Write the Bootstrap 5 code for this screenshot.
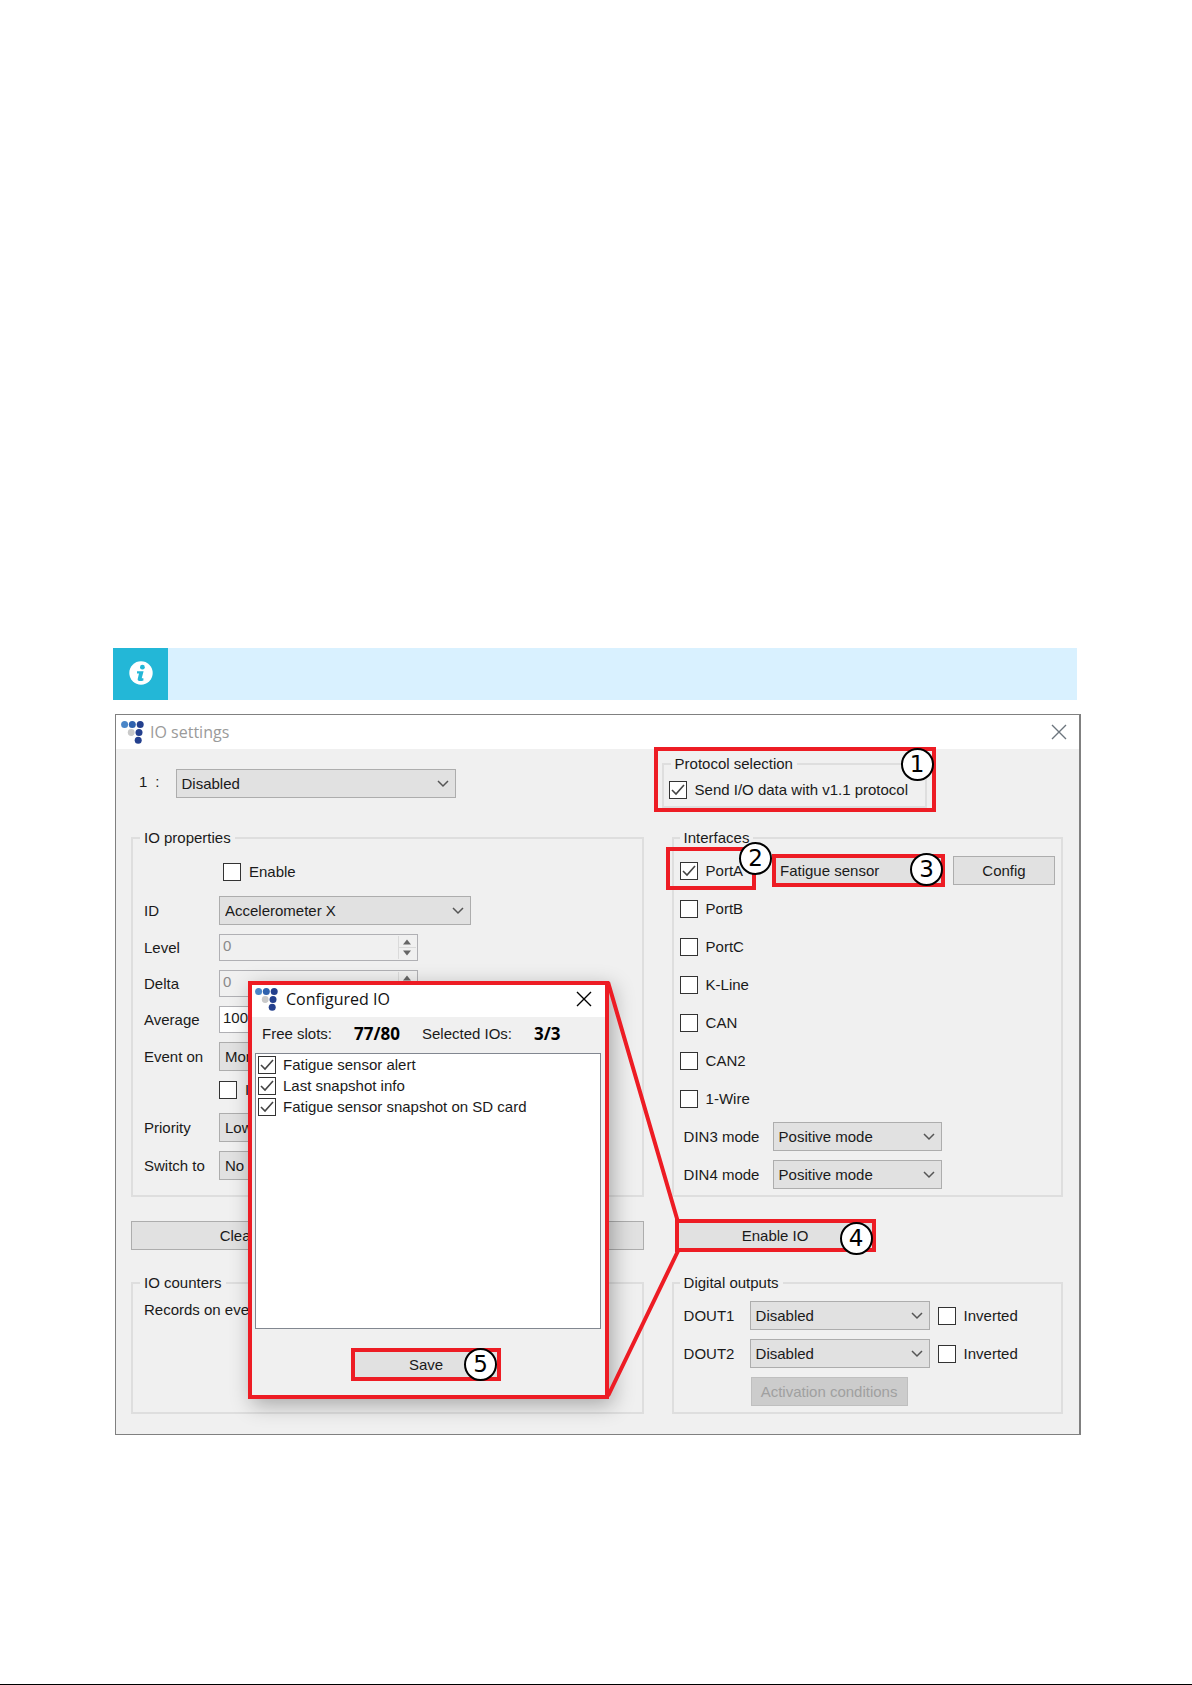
<!DOCTYPE html>
<html lang="en">
<head>
<meta charset="utf-8">
<meta name="viewport" content="width=device-width, initial-scale=1">
<title>IO settings</title>
<link href="https://cdn.jsdelivr.net/npm/bootstrap@5.3.0/dist/css/bootstrap.min.css" rel="stylesheet">
<style>
body{font-family:"Liberation Sans",Arial,sans-serif;font-size:15px;line-height:18px;color:#1a1a1a;background:#fff;min-height:100vh;border-bottom:1px solid #000}
.doc-page{padding:648px 111px 40px 113px}
.note-bar{height:52px;background:#d9f1ff;margin-right:4px}
.note-icon{width:55px;padding-bottom:2px;background:#23b7d7}
.app-window{margin:14px 0 0 2px;border:1px solid #808080;border-right-width:2px;background:#f0f0f0}
.title-bar{height:34px;background:#fff;font-family:"Open Sans","Noto Sans",sans-serif;font-size:16px;padding-left:5px}
.title-bar button,.dialog-title button{border:0;background:none;padding:0;line-height:0}
.main-title{color:#9a9a9a;padding:0 12px 0 6px}
.settings-grid{display:grid;grid-template-columns:512fr 391fr;column-gap:28px;padding:0 16px 20px 15px}
.group-box{border:2px solid #dedede;padding:9px 6px 6px 11px}
.group-box>legend{float:none;width:auto;margin:0 0 0 -4px;padding:0 4px;font-size:15px;line-height:18px}
.group-right{padding-left:6px}
.group-right>legend{margin-left:0}
.rows{display:flex;flex-direction:column;gap:9px}
.rows>div{display:flex;align-items:center}
.line{min-height:29px}
.line-first{min-height:31px}
.line-mid{min-height:24px}
.lab{width:75px;flex:none}
.lab-din{width:89px;margin-left:4px;flex:none}
.lab-out{width:66px;margin-left:4px;flex:none}
.form-select{--bs-form-select-bg-img:url("data:image/svg+xml,%3csvg xmlns='http://www.w3.org/2000/svg' viewBox='0 0 12 8'%3e%3cpath fill='none' stroke='%23555' stroke-width='1.5' d='M1 1l5 5 5-5'/%3e%3c/svg%3e");height:29px;font-size:15px;line-height:18px;padding:4px 24px 4px 5px;border:1px solid #adadad;border-radius:0;background-color:#e1e1e1;background-size:12px 8px;background-position:right 6px center;color:#1a1a1a}
.w-main{width:280px}.w-id{width:252px}.w-din{width:169px}.w-out{width:180px}
.num-box{width:199px;height:27px;border:1px solid #b0b0b4;background:#f0f0f0;display:flex;padding:1px}
.num-box input{flex:1;min-width:0;border:0;background:none;padding:0 0 4px 2px;color:#1a1a1a;line-height:18px}
.num-box input:disabled{color:#8a8a8a}
.num-box.editable{background:#fff}
.form-check-input{width:18px;height:18px;margin:0;flex:none;border:1px solid #333;border-radius:0!important;background-color:#fff}
.form-check-input:checked{background-color:#fff;border-color:#333;--bs-form-check-bg-image:url("data:image/svg+xml,%3csvg xmlns='http://www.w3.org/2000/svg' viewBox='0 0 16 16'%3e%3cpath fill='none' stroke='%23444' stroke-width='1.6' d='M2 8l4 4 8-9'/%3e%3c/svg%3e")!important;background-image:url("data:image/svg+xml,%3csvg xmlns='http://www.w3.org/2000/svg' viewBox='0 0 16 16'%3e%3cpath fill='none' stroke='%23444' stroke-width='1.6' d='M2 8l4 4 8-9'/%3e%3c/svg%3e")}
.check{display:flex;align-items:center;gap:8px}
.check-indent{margin-left:79px}
.flat-btn{height:29px;border:1px solid #adadad;border-radius:0;background:#e1e1e1;font-size:15px;line-height:18px;padding:0;color:#1a1a1a}
.flat-btn:disabled{background:#ccc;border-color:#bfbfbf;color:#a0a0a0;opacity:1}
.w-config{width:102px}.w-enable{width:197px;margin-left:5px}.w-act{width:157px;margin-left:71px}.w-save{width:146px}
.hl{outline:4px solid #ed1c24;outline-offset:-2px}
.hl-frame{position:absolute;border:4px solid #ed1c24;pointer-events:none}
.step-dot{position:absolute;z-index:3;width:33px;height:33px;border:2px solid #000;border-radius:50%;background:#fff;color:#000;font:23px/29px "DejaVu Sans",sans-serif;text-align:center}
.protocol-box{width:265px;margin:6px 0 21px -10px;padding:8px 5px 7px 5px;position:relative}
.protocol-box>legend{margin-left:2px}
.port-pair{gap:10px}
.frame-protocol{inset:-26px -11px -6px -10px}
.frame-port{inset:-15px -13px -10px -14px}
.dot-1{right:-9px;top:-25px}
.dot-2{right:-29px;top:-20px}
.dot-3{right:0;top:-3px}
.dot-4{right:1px;top:1px}
.dot-5{right:2px;top:-2px}
.dialog-box{position:absolute;z-index:2;left:132px;top:232px;width:361px;height:418px;border:4px solid #ed1c24;background:#f0f0f0;box-shadow:4px 6px 20px rgba(0,0,0,.3)}
.dialog-title{height:32px;background:#fff;font-family:"Open Sans","Noto Sans",sans-serif;font-size:16px;padding:0 13px 4px 3px;color:#111}
.dialog-stats{height:36px;padding:0 0 3px 10px;gap:22px}
.dialog-stats strong{font-family:"Noto Sans",sans-serif;font-size:17px;color:#000}
.io-list{height:276px;margin:0 4px 21px 3px;border:1px solid #828790;background:#fff;padding:0 2px}
.io-list .check{height:21px;gap:7px}
.save-row{padding-right:5px}
.callout-lines{position:absolute;z-index:2;left:490px;top:230px;pointer-events:none}
</style>
<script src="https://cdn.jsdelivr.net/npm/bootstrap@5.3.0/dist/js/bootstrap.bundle.min.js"></script>
</head>
<body>
<svg width="0" height="0" class="position-absolute" aria-hidden="true">
<symbol id="logo" viewBox="0 0 23 23"><circle cx="3.6" cy="3.600" r="3.500" fill="#4a86c8"/><circle cx="11.300" cy="3.600" r="3.500" fill="#2f62ae"/><circle cx="19.200" cy="3.600" r="3.500" fill="#24408e"/><circle cx="10.200" cy="11.500" r="3.400" fill="#c9c9c9"/><circle cx="18" cy="11.500" r="3.500" fill="#24408e"/><circle cx="17.200" cy="19.200" r="3.500" fill="#24408e"/></symbol>
<symbol id="close" viewBox="0 0 16 16"><path d="M1 1l14 14M15 1L1 15" fill="none" stroke="currentColor" stroke-width="1.4"/></symbol>
<symbol id="spin" viewBox="0 0 22 23"><path d="M4.500 0v23M4 11.500h18" stroke="#dadada" fill="none"/><path d="M9 8.500l4-5 4 5zM9 14.500l4 5 4-5z" fill="#666"/></symbol>
</svg>
<main class="doc-page">
  <div class="note-bar d-flex" role="note">
    <div class="note-icon d-flex align-items-center justify-content-center"><svg width="24" height="24" viewBox="0 0 24 24" aria-label="Info"><circle cx="12" cy="12" r="11.700" fill="#fff"/><circle cx="13.400" cy="6.200" r="2.400" fill="#23b7d7"/><path d="M8 10.200h6.600l-1.900 7h1.700v2.300c-3 1-6.200.9-5.700-1.500l1.300-5.400H8z" fill="#23b7d7"/></svg></div>
  </div>

  <section class="app-window">
    <header class="title-bar d-flex align-items-center">
      <svg width="23" height="23"><use href="#logo"/></svg>
      <span class="main-title">IO settings</span>
      <button class="ms-auto me-2 pe-1 text-secondary" aria-label="Close"><svg width="16" height="16"><use href="#close"/></svg></button>
    </header>

    <div class="position-relative">
      <div class="settings-grid">
        <div class="d-flex align-items-start ps-2 pt-3">
          <label for="slot" class="d-flex gap-2 pt-2 pe-3 text-nowrap"><span>1</span><span>:</span></label>
          <select id="slot" class="form-select w-main mt-1"><option>Disabled</option></select>
        </div>
        <fieldset class="group-box protocol-box">
          <legend>Protocol selection</legend>
          <div class="check"><input class="form-check-input" type="checkbox" id="proto" checked><label for="proto" class="text-nowrap">Send I/O data with v1.1 protocol</label></div>
          <span class="hl-frame frame-protocol"></span><span class="step-dot dot-1">1</span>
        </fieldset>

        <fieldset class="group-box">
          <legend>IO properties</legend>
          <div class="rows">
            <div class="line-first"><div class="check check-indent"><input class="form-check-input" type="checkbox" id="en"><label for="en">Enable</label></div></div>
            <div><label class="lab" for="id">ID</label><select id="id" class="form-select w-id"><option>Accelerometer X</option></select></div>
            <div><label class="lab" for="lvl">Level</label><div class="num-box"><input id="lvl" value="0" disabled><svg width="22" height="23"><use href="#spin"/></svg></div></div>
            <div><label class="lab" for="dlt">Delta</label><div class="num-box"><input id="dlt" value="0" disabled><svg width="22" height="23"><use href="#spin"/></svg></div></div>
            <div><label class="lab" for="avg">Average</label><div class="num-box editable"><input id="avg" value="1000"><svg width="22" height="23"><use href="#spin"/></svg></div></div>
            <div><label class="lab" for="evt">Event on</label><select id="evt" class="form-select w-id"><option>Monitoring</option></select></div>
            <div class="line-mid"><span class="lab"></span><div class="check mb-1"><input class="form-check-input" type="checkbox" id="inc"><label for="inc">Include</label></div></div>
            <div><label class="lab" for="pri">Priority</label><select id="pri" class="form-select w-id"><option>Low</option></select></div>
            <div><label class="lab" for="swi">Switch to</label><select id="swi" class="form-select w-id"><option>No</option></select></div>
          </div>
        </fieldset>

        <fieldset class="group-box group-right">
          <legend>Interfaces</legend>
          <div class="rows">
            <div class="line">
              <div class="check position-relative"><input class="form-check-input" type="checkbox" id="pa" checked><label for="pa">PortA</label><span class="hl-frame frame-port"></span><span class="step-dot dot-2">2</span></div>
              <div class="d-flex ms-auto port-pair">
                <div class="position-relative"><select class="form-select w-din hl" aria-label="PortA device"><option>Fatigue sensor</option></select><span class="step-dot dot-3">3</span></div>
                <button class="btn flat-btn w-config">Config</button>
              </div>
            </div>
            <div class="line"><div class="check"><input class="form-check-input" type="checkbox" id="pb"><label for="pb">PortB</label></div></div>
            <div class="line"><div class="check"><input class="form-check-input" type="checkbox" id="pc"><label for="pc">PortC</label></div></div>
            <div class="line"><div class="check"><input class="form-check-input" type="checkbox" id="kl"><label for="kl">K-Line</label></div></div>
            <div class="line"><div class="check"><input class="form-check-input" type="checkbox" id="can"><label for="can">CAN</label></div></div>
            <div class="line"><div class="check"><input class="form-check-input" type="checkbox" id="can2"><label for="can2">CAN2</label></div></div>
            <div class="line"><div class="check"><input class="form-check-input" type="checkbox" id="ow"><label for="ow">1-Wire</label></div></div>
            <div><label class="lab-din" for="d3">DIN3 mode</label><select id="d3" class="form-select w-din"><option>Positive mode</option></select></div>
            <div><label class="lab-din" for="d4">DIN4 mode</label><select id="d4" class="form-select w-din"><option>Positive mode</option></select></div>
          </div>
        </fieldset>

        <div class="d-flex gap-2 pt-4 pb-4">
          <button class="btn flat-btn flex-fill w-50">Clear all IO</button>
          <button class="btn flat-btn flex-fill w-50">Clear</button>
        </div>
        <div class="pt-4 pb-4">
          <div class="position-relative d-inline-block"><button class="btn flat-btn w-enable hl">Enable IO</button><span class="step-dot dot-4">4</span></div>
        </div>

        <fieldset class="group-box">
          <legend>IO counters</legend>
          <div>Records on event: 0</div>
        </fieldset>
        <fieldset class="group-box group-right">
          <legend>Digital outputs</legend>
          <div class="rows">
            <div><label class="lab-out" for="o1">DOUT1</label><select id="o1" class="form-select w-out me-2"><option>Disabled</option></select><div class="check"><input class="form-check-input" type="checkbox" id="i1"><label for="i1">Inverted</label></div></div>
            <div><label class="lab-out" for="o2">DOUT2</label><select id="o2" class="form-select w-out me-2"><option>Disabled</option></select><div class="check"><input class="form-check-input" type="checkbox" id="i2"><label for="i2">Inverted</label></div></div>
            <div><button class="btn flat-btn w-act" disabled>Activation conditions</button></div>
          </div>
        </fieldset>
      </div>

      <section class="dialog-box" role="dialog" aria-label="Configured IO">
        <header class="dialog-title d-flex align-items-center">
          <svg width="23" height="23"><use href="#logo"/></svg><span class="ps-2">Configured IO</span>
          <button class="ms-auto" aria-label="Close"><svg width="16" height="16"><use href="#close"/></svg></button>
        </header>
        <div class="dialog-stats d-flex align-items-center"><span>Free slots:</span><strong>77/80</strong><span>Selected IOs:</span><strong>3/3</strong></div>
        <div class="io-list">
          <div class="check"><input class="form-check-input" type="checkbox" id="f1" checked><label for="f1">Fatigue sensor alert</label></div>
          <div class="check"><input class="form-check-input" type="checkbox" id="f2" checked><label for="f2">Last snapshot info</label></div>
          <div class="check"><input class="form-check-input" type="checkbox" id="f3" checked><label for="f3">Fatigue sensor snapshot on SD card</label></div>
        </div>
        <div class="text-center save-row"><div class="position-relative d-inline-block"><button class="btn flat-btn w-save hl">Save</button><span class="step-dot dot-5">5</span></div></div>
      </section>
      <svg class="callout-lines" width="75" height="425" aria-hidden="true"><path d="M2 3L72 243M2 417L72 272" fill="none" stroke="#ed1c24" stroke-width="4"/></svg>
    </div>
  </section>
</main>
</body>
</html>
